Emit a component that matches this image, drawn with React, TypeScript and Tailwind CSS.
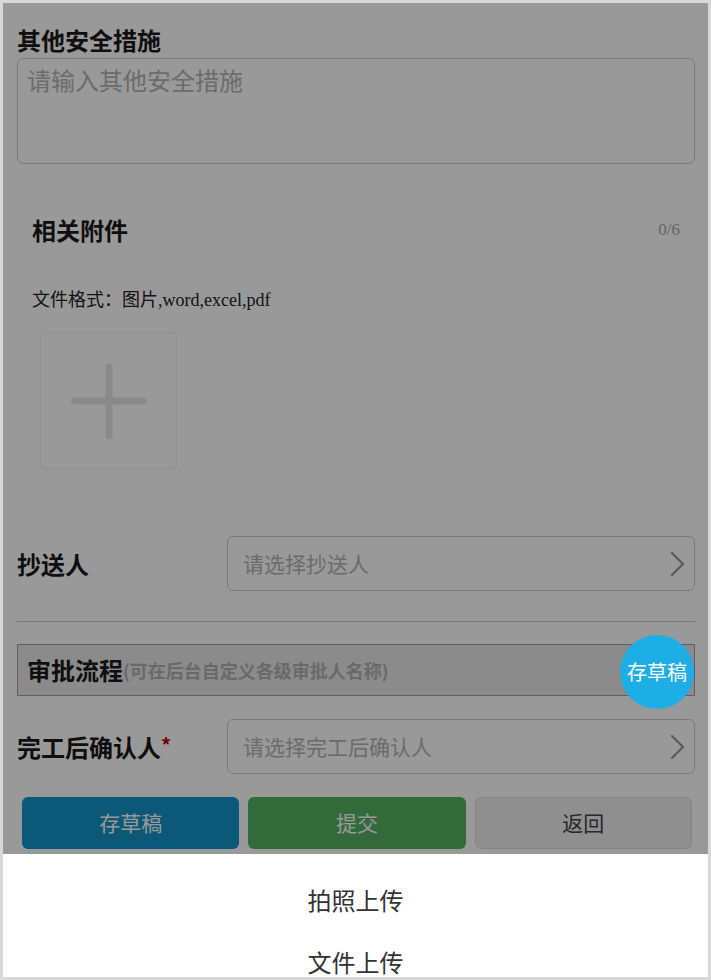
import React from "react";

const cjk = { fontFamily: '"Noto Sans CJK SC", "Noto Sans", sans-serif' };
const serif = { fontFamily: '"Liberation Serif", "Noto Sans CJK SC", serif' };

function Chevron() {
  return (
    <svg width="16" height="26" viewBox="0 0 16 26" fill="none" className="shrink-0">
      <path d="M2 2 L13 13 L2 24" stroke="#9a9a9a" strokeWidth="2.4" strokeLinecap="round" strokeLinejoin="round" />
    </svg>
  );
}

function PickerRow({ label, placeholder, required }: { label: string; placeholder: string; required?: boolean }) {
  return (
    <div className="flex items-center">
      <div className="w-[210px] shrink-0 text-[24px] font-bold text-[#1a1a1a] leading-none">
        {label}
        {required && <span className="text-[#cc0000] text-[20px] align-top">*</span>}
      </div>
      <div className="flex-1 h-[55px] rounded-[6px] border border-[#cccccc] flex items-center pl-[15px] pr-[8px]">
        <span className="flex-1 text-[21px] text-[#b3b3b3]">{placeholder}</span>
        <Chevron />
      </div>
    </div>
  );
}

export default function App() {
  return (
    <div className="relative w-[711px] h-[980px] overflow-hidden border-[3px] border-[#d8d8d8] bg-white" style={cjk}>
      <div className="pl-[14px] pr-[13px] pt-[19px]">
        <div className="text-[24px] leading-[36px] font-bold text-[#1a1a1a]">其他安全措施</div>
        <textarea
          className="block w-full h-[106px] rounded-[6px] border border-[#cccccc] px-[9px] py-[3px] text-[24px] leading-[36px] resize-none outline-none placeholder:text-[#b3b3b3]"
          placeholder="请输入其他安全措施"
          style={cjk}
        />

        <div className="px-[15px] mt-[48px]">
          <div className="flex items-center justify-between h-[36px]">
            <span className="text-[24px] font-bold text-[#1a1a1a]">相关附件</span>
            <span className="text-[17px] text-[#aaaaaa]" style={serif}>0/6</span>
          </div>
          <div className="mt-[40px] text-[18px] leading-[24px] text-[#222222]" style={serif}>
            文件格式：图片,word,excel,pdf
          </div>
          <div className="mt-[20px] ml-[8px] w-[137px] h-[137px] rounded-[4px] border border-[#eeeeee] flex items-center justify-center">
            <svg width="76" height="76" viewBox="0 0 76 76">
              <rect x="34.5" y="0" width="7" height="76" rx="3.5" fill="#e6e6e6" />
              <rect x="0" y="34.5" width="76" height="7" rx="3.5" fill="#e6e6e6" />
            </svg>
          </div>
        </div>

        <div className="mt-[67px]">
          <PickerRow label="抄送人" placeholder="请选择抄送人" />
        </div>

        <div className="mt-[30px] h-px bg-[#c6c6c6]" />

        <div className="mt-[22px] h-[52px] border border-[#9e9e9e] bg-[#e8e8e8] flex items-center pl-[9px]">
          <span className="text-[24px] font-bold text-[#1a1a1a]">审批流程</span>
          <span className="text-[18px] font-bold text-[#b0b0b0]">(可在后台自定义各级审批人名称)</span>
        </div>

        <div className="mt-[23px]">
          <PickerRow label="完工后确认人" placeholder="请选择完工后确认人" required />
        </div>

        <div className="mt-[23px] pl-[5px] pr-[3px] grid grid-cols-3 gap-[9px]">
          <button className="h-[52px] rounded-[6px] bg-[#1493c8] text-white text-[21px]" style={cjk}>存草稿</button>
          <button className="h-[52px] rounded-[6px] bg-[#55b162] text-white text-[21px]" style={cjk}>提交</button>
          <button className="h-[52px] rounded-[6px] bg-[#eeeeee] border border-[#dddddd] text-[#444444] text-[21px]" style={cjk}>返回</button>
        </div>
      </div>

      {/* dimming mask behind the action sheet */}
      <div className="absolute inset-0 bg-black/40" />

      {/* floating draft button */}
      <button
        className="absolute left-[617px] top-[632px] w-[74px] h-[74px] rounded-full bg-[#1eaee6] text-white text-[20px] flex items-center justify-center"
        style={cjk}
      >
        存草稿
      </button>

      {/* action sheet */}
      <div className="absolute left-0 right-0 bottom-0 h-[123px] bg-white flex flex-col items-center">
        <div className="mt-[30px] text-[24px] leading-[32px] text-[#333333]">拍照上传</div>
        <div className="mt-[30px] text-[24px] leading-[32px] text-[#333333]">文件上传</div>
      </div>
    </div>
  );
}
